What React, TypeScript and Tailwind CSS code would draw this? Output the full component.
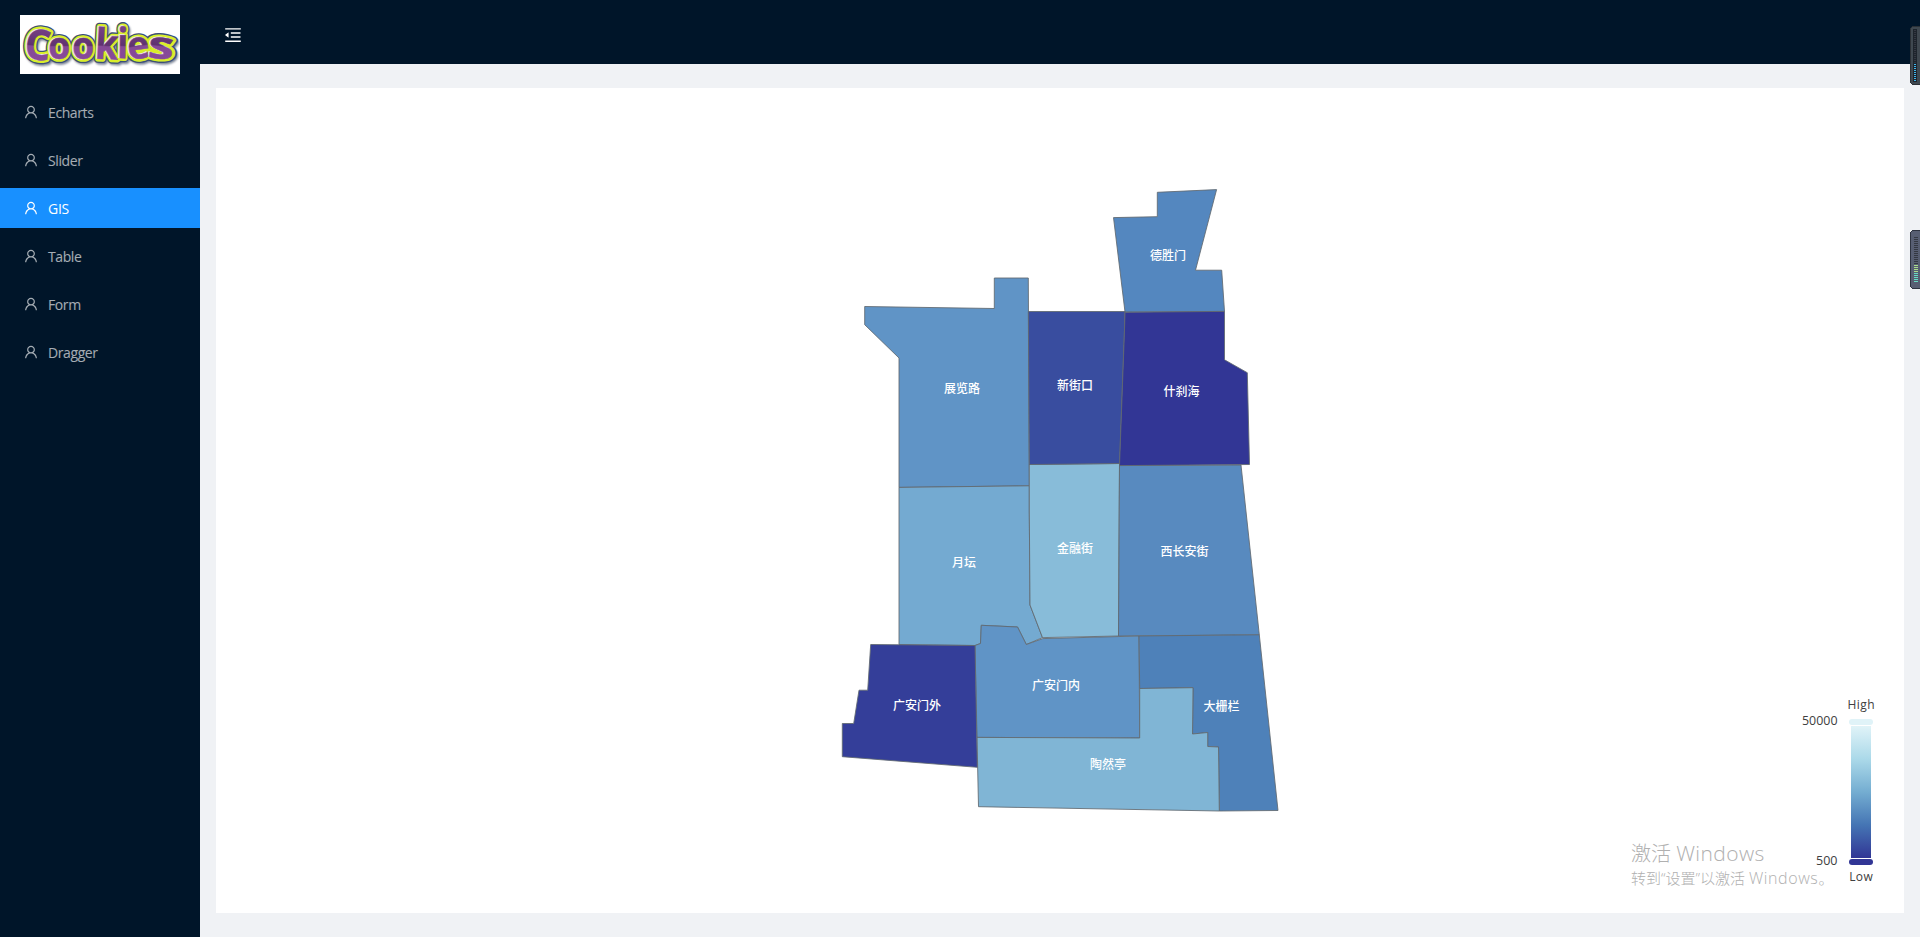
import { AiOutlineMenuFold, AiOutlineUser } from "react-icons/ai";

type Region = {
  name: string;
  fill: string;
  points: string;
  label: [number, number];
};

const regions: Region[] = [
  { name: "展览路", fill: "#6094c6", label: [962, 388.5], points: "864.7,306.5 994.3,308.5 994.3,278 1028.3,278 1029.3,485.8 899,487.4 899,358 864.7,324.7" },
  { name: "月坛", fill: "#74aad1", label: [964, 562.5], points: "899,487.4 1029.3,485.8 1029.3,512 1030,605 1042.5,637.6 1026.3,644.5 1017.5,627 981.3,625.3 980.5,643.5 975,645.5 899,644.5" },
  { name: "金融街", fill: "#88bcd9", label: [1075, 548], points: "1029.3,464.5 1119.5,463.5 1118.5,636 1042.5,637.6 1030,605 1029.3,512" },
  { name: "西长安街", fill: "#588abf", label: [1184.5, 551.5], points: "1119.5,465.5 1241,465 1259.3,634.8 1118.5,636" },
  { name: "广安门内", fill: "#6094c6", label: [1056, 685.2], points: "975,645.5 980.5,643.5 981.3,625.3 1017.5,627 1026.3,644.5 1042.7,638.6 1139,636 1139.7,738 977,737.4" },
  { name: "大栅栏", fill: "#4e81b9", label: [1221.5, 706.2], points: "1139,636 1259.3,634.8 1278,810.5 1219.3,811 1218.5,747 1207.7,746.5 1207.7,732.5 1192.5,734 1193,687.7 1139.7,688.5" },
  { name: "陶然亭", fill: "#80b5d5", label: [1108, 764.5], points: "977,737.4 1139.7,738 1139.7,688.5 1193,687.7 1192.5,734 1207.7,732.5 1207.7,746.5 1218.5,747 1219.3,811 978.5,806.7" },
  { name: "广安门外", fill: "#343e99", label: [917, 705.2], points: "870.7,644.5 975,645.5 977.3,767.3 842.3,756.7 842.3,723.5 853.7,723.5 859,690.2 867.7,690.2" },
  { name: "德胜门", fill: "#5487bf", label: [1168, 255.2], points: "1157.3,192.3 1216.6,189.6 1195.5,270.2 1221.7,270.2 1224.5,311.4 1125,312 1113.5,217.6 1157.3,216.7" },
  { name: "新街口", fill: "#394d9f", label: [1075, 385.5], points: "1028.3,311.5 1125,311.5 1124.5,330 1119.5,463.5 1029.3,464.5" },
  { name: "什刹海", fill: "#323695", label: [1181.5, 391.2], points: "1125,312.3 1224.5,311.4 1224.5,359.8 1247.3,372.7 1249.5,464.5 1119.5,465.6 1124.5,330" },
];

const menu = ["Echarts", "Slider", "GIS", "Table", "Form", "Dragger"];

const letters: { ch: string; x: number; y: number; size: number; width: number; rotate: number }[] = [
  { ch: "C", x: 4.5, y: 44.5, size: 42, width: 26, rotate: 6 },
  { ch: "o", x: 28, y: 44, size: 38, width: 22, rotate: 0 },
  { ch: "o", x: 52, y: 44, size: 38, width: 22, rotate: 0 },
  { ch: "k", x: 75, y: 44, size: 42, width: 23, rotate: 3 },
  { ch: "i", x: 97, y: 43, size: 42, width: 11, rotate: 1 },
  { ch: "e", x: 107, y: 43.5, size: 38, width: 22, rotate: -8 },
  { ch: "s", x: 128, y: 43.5, size: 38, width: 26, rotate: 6 },
];

function LogoLayer({ fill, stroke, strokeWidth, dx = 0, dy = 0 }: { fill: string; stroke: string; strokeWidth: number; dx?: number; dy?: number }) {
  return (
    <g fill={fill} stroke={stroke} strokeWidth={strokeWidth} strokeLinejoin="round" transform={`translate(${dx} ${dy})`}>
      {letters.map((l, i) => (
        <text
          key={i}
          x={l.x}
          y={l.y}
          fontSize={l.size}
          textLength={l.width}
          lengthAdjust="spacingAndGlyphs"
          transform={`rotate(${l.rotate} ${l.x + l.width / 2} 32)`}
        >
          {l.ch}
        </text>
      ))}
    </g>
  );
}

function Logo() {
  return (
    <svg viewBox="0 0 160 59" className="block h-[59px] w-40 overflow-visible bg-white font-['Open_Sans',sans-serif] font-bold">
      <defs>
        <linearGradient id="letter" gradientUnits="userSpaceOnUse" x1="0" y1="10" x2="0" y2="46">
          <stop offset="0" stopColor="#7a4488" />
          <stop offset="0.56" stopColor="#5f3270" />
          <stop offset="0.6" stopColor="#854a96" />
          <stop offset="1" stopColor="#87499a" />
        </linearGradient>
        <filter id="soft" x="-10%" y="-20%" width="120%" height="150%">
          <feGaussianBlur stdDeviation="1.2" />
        </filter>
      </defs>
      <g filter="url(#soft)" opacity="0.7">
        <LogoLayer fill="#3d4a63" stroke="#3d4a63" strokeWidth={7.5} dx={1.5} dy={2} />
      </g>
      <LogoLayer fill="#3c4f78" stroke="#3c4f78" strokeWidth={8.2} />
      <LogoLayer fill="#d9ee2a" stroke="#d9ee2a" strokeWidth={5.6} />
      <LogoLayer fill="#e9e2f0" stroke="#e9e2f0" strokeWidth={0.8} dx={-0.7} dy={-0.3} />
      <LogoLayer fill="url(#letter)" stroke="url(#letter)" strokeWidth={0.5} dx={0.2} dy={0.2} />
    </svg>
  );
}

function RegionMap() {
  return (
    <svg viewBox="216 88 1688 825" className="block h-[825px] w-[1688px] font-['Liberation_Sans','Noto_Sans_CJK_SC',sans-serif] text-[12px]">
      <defs>
        <linearGradient id="scale" x1="0" y1="0" x2="0" y2="1">
          <stop offset="0" stopColor="#e0f3f8" />
          <stop offset="0.25" stopColor="#abd9e9" />
          <stop offset="0.5" stopColor="#74add1" />
          <stop offset="0.75" stopColor="#4575b4" />
          <stop offset="1" stopColor="#313695" />
        </linearGradient>
      </defs>
      {regions.map((r) => (
        <polygon key={r.name} points={r.points} fill={r.fill} stroke="#606870" strokeOpacity="0.85" strokeWidth="1" />
      ))}
      <g fill="#fff" textAnchor="middle" className="font-medium">
        {regions.map((r) => (
          <text key={r.name} x={r.label[0]} y={r.label[1] + 4.8}>
            {r.name}
          </text>
        ))}
      </g>
      <g fill="#404040" className="font-['Open_Sans',sans-serif]">
        <text x="1861" y="709" textAnchor="middle" textLength="27">High</text>
        <text x="1861" y="881" textAnchor="middle" textLength="23.5">Low</text>
        <text x="1802" y="725" textLength="35.5" lengthAdjust="spacingAndGlyphs">50000</text>
        <text x="1816" y="865" textLength="21.5" lengthAdjust="spacingAndGlyphs">500</text>
      </g>
      <rect x="1851" y="726" width="20" height="132" fill="url(#scale)" />
      <rect x="1849" y="719" width="24" height="6" rx="3" fill="#e0f3f8" />
      <rect x="1849" y="859" width="24" height="6" rx="3" fill="#313695" />
    </svg>
  );
}

const meters = {
  blue: { body: "#3f4850", edge: "#2a3036", count: 26, start: 4, lit: 17, width: 2, off: "#343842", colors: ["#3fb4ea", "#3fb4ea"] },
  green: { body: "#575e72", edge: "#2e3340", count: 23, start: 7, lit: 14, width: 4, off: "#343842", colors: ["#a9dc8a", "#66dcc4"] },
};

function Meter({ kind }: { kind: keyof typeof meters }) {
  const m = meters[kind];
  const ticks = Array.from({ length: m.count }, (_, i) => i);
  return (
    <svg viewBox="0 0 10 59" className="block h-[59px] w-2.5" shapeRendering="crispEdges">
      <path d="M10 .5H2.5L.5 2.5V56.5L2.5 58.5H10" fill={m.body} stroke={m.edge} />
      {kind === "blue" && <rect x="3" y="3" width="4" height="53" fill="#1d242c" />}
      {ticks.map((i) => (
        <rect
          key={i}
          x="4"
          y={m.start + i * 2}
          width={m.width}
          height="1"
          fill={i < m.lit ? m.off : i < m.lit + 4 ? m.colors[0] : m.colors[1]}
        />
      ))}
    </svg>
  );
}

export default function App() {
  return (
    <div className="relative flex h-[937px] w-[1920px] overflow-hidden bg-[#f0f2f5] font-['Open_Sans','Noto_Sans_CJK_SC',sans-serif] text-sm">
      <aside className="flex w-[200px] shrink-0 flex-col bg-[#001529]">
        <div className="px-5 pt-[15px]">
          <Logo />
        </div>
        <nav className="mt-[18px] flex flex-col gap-2">
          {menu.map((item) => (
            <a
              key={item}
              className={
                item === "GIS"
                  ? "flex h-10 items-center gap-2 bg-[#1890ff] px-[23px] tracking-[-0.3px] text-white"
                  : "flex h-10 items-center gap-2 px-[23px] tracking-[-0.4px] text-white/65"
              }
            >
              <AiOutlineUser size={16} className="mr-px shrink-0" />
              <span className="pt-px">{item}</span>
            </a>
          ))}
        </nav>
      </aside>
      <div className="flex flex-1 flex-col">
        <header className="flex h-16 items-center bg-[#001529] px-[23px] pt-1.5 text-white">
          <AiOutlineMenuFold size={20} />
        </header>
        <main className="mx-4 my-6 h-[825px] w-[1688px] bg-white">
          <RegionMap />
        </main>
      </div>
      <div className="absolute top-[840px] left-[1631px] font-light whitespace-nowrap text-[#b0b0b0]">
        <div className="text-xl leading-[27px]">
          激活 <span className="text-[21px] tracking-[0.4px]">Windows</span>
        </div>
        <div className="-mt-px text-[15px] leading-[18px]">
          转到“设置”以激活 <span className="text-base tracking-[0.6px]">Windows</span>。
        </div>
      </div>
      <div className="absolute top-[26px] left-[1910px]">
        <Meter kind="blue" />
      </div>
      <div className="absolute top-[230px] left-[1910px]">
        <Meter kind="green" />
      </div>
    </div>
  );
}
